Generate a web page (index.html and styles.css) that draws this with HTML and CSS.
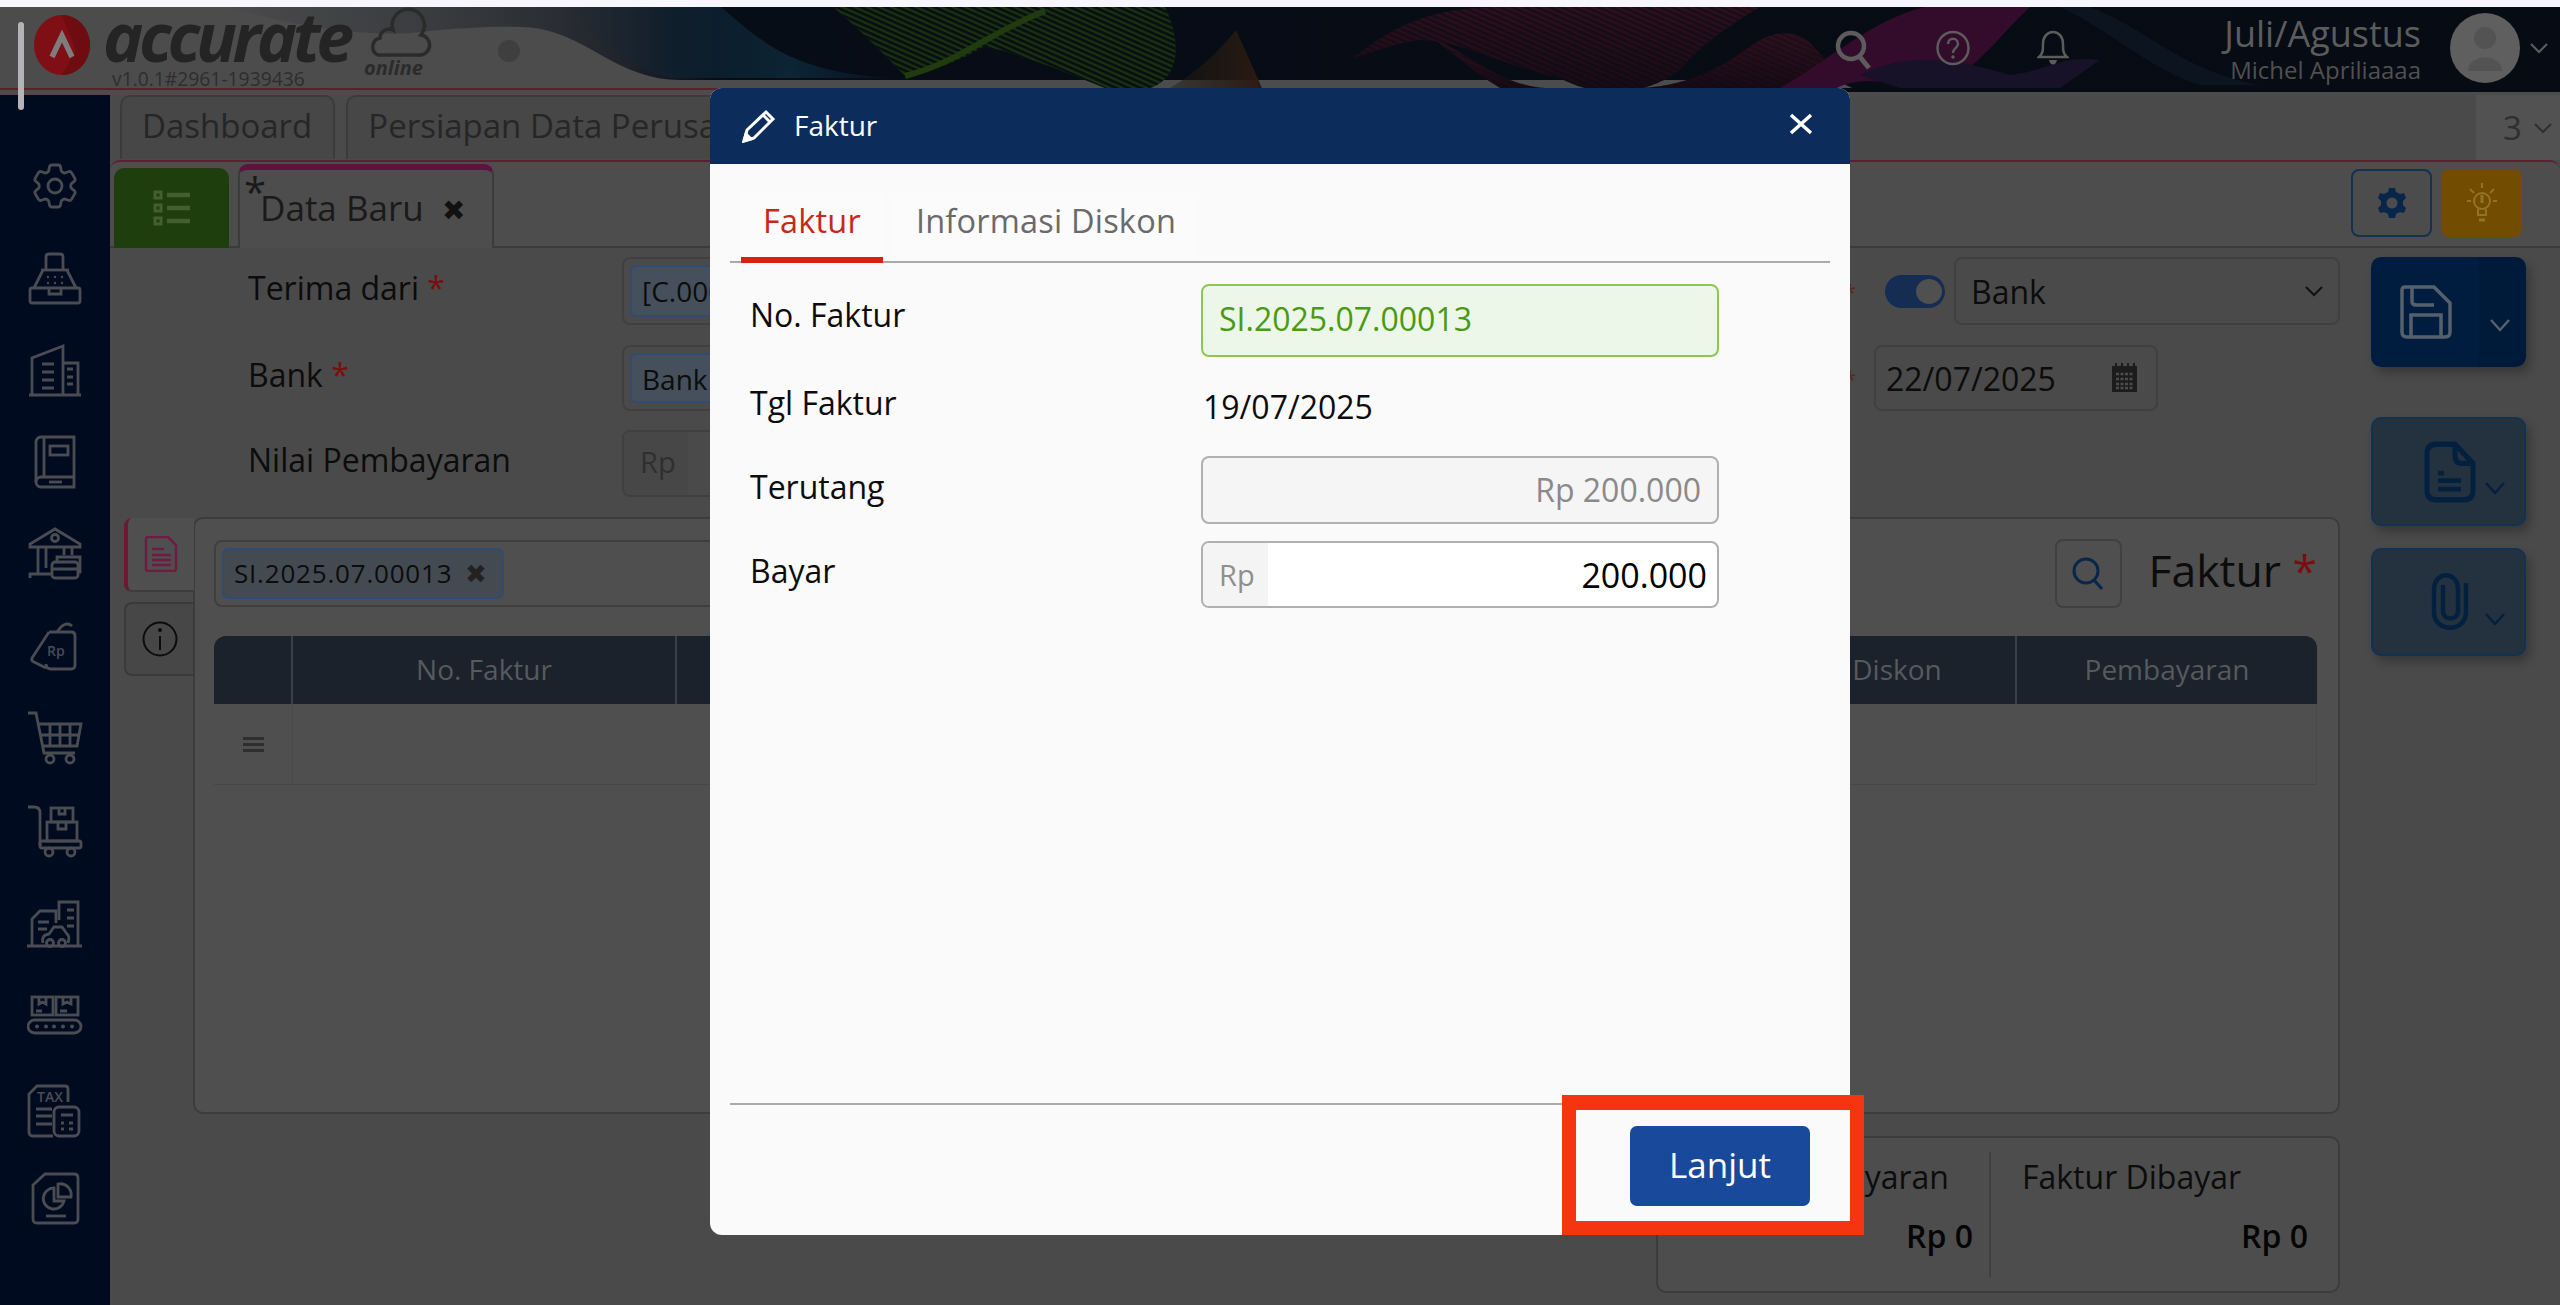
FILE: index.html
```html
<!DOCTYPE html>
<html lang="en">
<head>
  <meta charset="UTF-8">
  <title>Accurate Online - Penerimaan Penjualan</title>
  <link rel="stylesheet" href="styles.css">
</head>
<body>

  <div class="top-strip"></div>

  <header class="app-header">
    <svg class="header-art" viewBox="0 7 2560 88" width="2560" height="88" preserveAspectRatio="none">
      <defs>
        <linearGradient id="darkFade" x1="0" x2="1" y1="0" y2="0">
          <stop offset="0" stop-color="#4a4a4c"/>
          <stop offset="0.08" stop-color="#3c3d40"/>
          <stop offset="0.14" stop-color="#2a2d33"/>
          <stop offset="0.17" stop-color="#1f232b"/>
          <stop offset="0.21" stop-color="#070d16"/>
          <stop offset="1" stop-color="#060b14"/>
        </linearGradient>
        <linearGradient id="blueFade" x1="0" x2="1" y1="0" y2="0">
          <stop offset="0" stop-color="#10283a" stop-opacity="0"/>
          <stop offset="0.7" stop-color="#0c2434"/>
          <stop offset="1" stop-color="#0c2238" stop-opacity="0.3"/>
        </linearGradient>
        <linearGradient id="redFade" x1="0" x2="0" y1="0" y2="1">
          <stop offset="0" stop-color="#30101d"/>
          <stop offset="1" stop-color="#1a0a13"/>
        </linearGradient>
        <linearGradient id="brownFade" x1="0" x2="1" y1="0" y2="0">
          <stop offset="0" stop-color="#1d1a10" stop-opacity="0.4"/>
          <stop offset="1" stop-color="#2c1a12"/>
        </linearGradient>
        <pattern id="waveLines" width="5" height="5" patternUnits="userSpaceOnUse" patternTransform="rotate(24)">
          <rect width="5" height="2.800" fill="#060b14" fill-opacity="0.9"/>
        </pattern>
        <path id="g1" d="M833 7H1040C1010 25 980 62 905 76C880 50 860 30 833 7Z"/>
        <path id="g2" d="M1030 7H1165C1185 50 1175 80 1150 88H1105C1060 70 1010 50 985 47C1005 30 1020 15 1030 7Z"/>
        <path id="c1" d="M1353 58C1390 28 1430 7 1500 7H1760C1730 25 1700 45 1680 70C1640 100 1590 95 1560 78C1500 65 1460 40 1420 40C1400 42 1380 50 1353 58Z"/>
        <path id="c2" d="M1430 36C1470 55 1500 85 1545 88H1640C1700 85 1730 60 1760 40C1780 30 1800 30 1815 48C1830 65 1850 80 1790 88L1500 88C1470 70 1450 50 1430 36Z"/>
      </defs>
      <rect x="0" y="7" width="2560" height="88" fill="#4c4c4c"/>
      <path d="M230 7C290 26 370 38 420 32C470 27 520 25 540 29C590 38 620 80 680 80H1830C1845 80 1850 92 1870 92H2560V7Z" fill="url(#darkFade)"/>
      <path d="M560 7H721C760 40 790 72 890 78H670C630 70 600 30 560 7Z" fill="url(#blueFade)"/>
      <use href="#g1" fill="#1a320e"/>
      <use href="#g1" fill="url(#waveLines)"/>
      <use href="#g2" fill="#1a320e"/>
      <use href="#g2" fill="url(#waveLines)"/>
      <path d="M905 76C960 62 990 32 1045 11" fill="none" stroke="#213b0e" stroke-width="6"/>
      <path d="M1170 88C1200 70 1220 50 1236 30L1262 88Z" fill="url(#brownFade)"/>
      <use href="#c1" fill="url(#redFade)"/>
      <use href="#c1" fill="url(#waveLines)" fill-opacity="0.6"/>
      <use href="#c2" fill="url(#redFade)"/>
      <use href="#c2" fill="url(#waveLines)" fill-opacity="0.4"/>
      <path d="M1780 88C1830 60 1870 20 1925 7H2030C2000 35 1980 65 1950 80C1900 90 1860 70 1830 92Z" fill="#330b2b"/>
      <path d="M1860 75C1910 50 1960 60 2010 75C2050 70 2060 55 2100 60L2060 88H1900Z" fill="#171228"/>
      <path d="M2090 7C2150 30 2180 70 2260 85H2200C2150 70 2110 30 2060 7Z" fill="#0d1722" fill-opacity="0.8"/>
      <rect x="0" y="88" width="1840" height="2" fill="#5e2028"/>
      <rect x="1840" y="88" width="720" height="4" fill="#060b14"/>
      <rect x="1840" y="92" width="720" height="3" fill="#4c4c4c"/>
    </svg>

    <svg class="logo" width="540" height="88" viewBox="0 7 540 88">
      <ellipse cx="62" cy="45" rx="28" ry="30" fill="#7f0f15"/>
      <path d="M62 15A28 30 0 0 1 62 75L76 50Z" fill="#6d0c11"/>
      <path d="M52 57L62 36L72 57" fill="none" stroke="#7d7d7d" stroke-width="5.500"/>
      <text class="logo-word" x="103" y="62">accurate</text>
      <path d="M378 55H418A10 10 0 0 0 421 35A16 16 0 1 0 393 30A9 9 0 0 0 380 38A9 9 0 0 0 378 55Z" fill="none" stroke="#2b2b2b" stroke-width="3.500"/>
      <text class="logo-online" x="364" y="75">online</text>
      <text class="logo-version" x="112" y="86">v1.0.1#2961-1939436</text>
      <circle cx="509" cy="51" r="11" fill="#3f3f3f"/>
    </svg>

    <div class="header-tools">
      <svg class="tool-search" width="38" height="40" viewBox="0 0 38 40"><circle cx="16" cy="16" r="13" fill="none" stroke="#5c5c5c" stroke-width="4.500"/><path d="M25 27L34 38" stroke="#5c5c5c" stroke-width="5"/></svg>
      <svg class="tool-help" width="34" height="36" viewBox="0 0 34 36"><ellipse cx="17" cy="18" rx="15.500" ry="16" fill="none" stroke="#5c5c5c" stroke-width="2.500"/><path d="M12 14C12 7 22 7 22 14C22 18 17 18 17 23" fill="none" stroke="#5c5c5c" stroke-width="2.500"/><circle cx="17" cy="27" r="1.800" fill="#5c5c5c"/></svg>
      <svg class="tool-bell" width="32" height="36" viewBox="0 0 32 36"><path d="M2 27C6 24 6 20 6 14C6 7 10 2 16 2C22 2 26 7 26 14C26 20 26 24 30 27Z" fill="none" stroke="#5c5c5c" stroke-width="2.500"/><path d="M12 30C13 36 19 36 20 30" fill="#5c5c5c"/></svg>
      <div class="user-info">
        <div class="user-period">Juli/Agustus</div>
        <div class="user-name">Michel Apriliaaaa</div>
      </div>
      <svg class="avatar" width="70" height="70" viewBox="0 0 70 70"><circle cx="35" cy="35" r="35" fill="#5f5f5f"/><circle cx="35" cy="25" r="11" fill="#535353"/><path d="M18 58C18 40 52 40 52 58Z" fill="#535353"/></svg>
      <svg class="chev" width="18" height="12" viewBox="0 0 18 12"><path d="M1 2L9 10L17 2" fill="none" stroke="#5c5c5c" stroke-width="2"/></svg>
    </div>
  </header>

  <div class="app-body">
    <aside class="sidebar">
      <div class="side-item"><svg class="thin" width="56" height="56" viewBox="0 0 24 24"><path d="M9.594 3.94c.09-.542.56-.94 1.11-.94h2.593c.55 0 1.02.398 1.11.94l.213 1.281c.063.374.313.686.645.87.074.04.147.083.22.127.325.196.72.257 1.075.124l1.217-.456a1.125 1.125 0 0 1 1.37.49l1.296 2.247a1.125 1.125 0 0 1-.26 1.431l-1.003.827c-.293.241-.438.613-.43.992a7.723 7.723 0 0 1 0 .255c-.008.378.137.75.43.991l1.004.827c.424.35.534.955.26 1.43l-1.298 2.247a1.125 1.125 0 0 1-1.369.491l-1.217-.456c-.355-.133-.75-.072-1.076.124a6.47 6.47 0 0 1-.22.128c-.331.183-.581.495-.644.869l-.213 1.281c-.09.543-.56.94-1.11.94h-2.594c-.55 0-1.019-.398-1.11-.94l-.213-1.281c-.062-.374-.312-.686-.644-.87a6.52 6.52 0 0 1-.22-.127c-.325-.196-.72-.257-1.076-.124l-1.217.456a1.125 1.125 0 0 1-1.369-.49l-1.297-2.247a1.125 1.125 0 0 1 .26-1.431l1.004-.827c.292-.24.437-.613.43-.991a6.932 6.932 0 0 1 0-.255c.007-.38-.138-.751-.43-.992l-1.004-.827a1.125 1.125 0 0 1-.26-1.43l1.297-2.247a1.125 1.125 0 0 1 1.37-.491l1.216.456c.356.133.751.072 1.076-.124.072-.044.146-.086.22-.128.332-.183.582-.495.644-.869l.214-1.28Z"/><circle cx="12" cy="12" r="3"/></svg></div>
      <div class="side-item"><svg width="56" height="56" viewBox="0 0 56 56"><path d="M19 21V7Q19 4 22 4H33Q36 4 36 7V21"/><path d="M14 20H42"/><path d="M16 20L7 38M40 20L49 38"/><rect x="3" y="38" width="50" height="15" rx="2"/><path d="M22 38V44H34V38"/><g class="dots"><circle cx="21" cy="27" r="1.200"/><circle cx="28" cy="27" r="1.200"/><circle cx="35" cy="27" r="1.200"/><circle cx="21" cy="33" r="1.200"/><circle cx="28" cy="33" r="1.200"/><circle cx="35" cy="33" r="1.200"/></g></svg></div>
      <div class="side-item"><svg width="56" height="56" viewBox="0 0 56 56"><path d="M5 53V16L36 4V53"/><path d="M36 21H51V53"/><path d="M2 53H54"/><path d="M15 22H27M15 30H27M15 38H27M15 46H27M40 27H46M40 35H46M40 42H46"/></svg></div>
      <div class="side-item"><svg width="56" height="56" viewBox="0 0 56 56"><path d="M14 3H47V53H14A5 5 0 0 1 9 48V8A5 5 0 0 1 14 3Z"/><path d="M17 3V43M9 48A5 5 0 0 1 14 43H47"/><rect x="23" y="12" width="18" height="9"/><path d="M22 48H35"/></svg></div>
      <div class="side-item"><svg width="56" height="56" viewBox="0 0 56 56"><path d="M3 21V18L28 3L53 18V21Z"/><circle cx="28" cy="12" r="3.500"/><path d="M11 22V48M19 22V42M37 22V29M45 22V29"/><path d="M3 52V48H24"/><rect x="25" y="36" width="26" height="16" rx="3"/><path d="M25 43H51M30 36V31H53V46H51"/></svg></div>
      <div class="side-item"><svg width="56" height="56" viewBox="0 0 56 56"><path d="M22 14H44Q48 14 48 18V47Q48 51 44 51H24Q19 51 19 46"/><path d="M22 14L5 40Q4 43 7 44L19 50"/><path d="M30 14Q38 2 45 8"/><text class="side-text" x="20" y="38">Rp</text></svg></div>
      <div class="side-item"><svg width="56" height="56" viewBox="0 0 56 56"><path d="M1 3H9L17 43H48"/><path d="M12 14H54L50 36H15"/><path d="M23 14V36M33 14V36M43 14V36M13 25H52"/><circle cx="23" cy="49" r="4"/><circle cx="43" cy="49" r="4"/></svg></div>
      <div class="side-item"><svg width="56" height="56" viewBox="0 0 56 56"><path d="M1 5H7Q13 5 13 11V44"/><rect x="13" y="39" width="41" height="7" rx="2"/><circle cx="22" cy="50" r="4"/><circle cx="44" cy="50" r="4"/><rect x="20" y="20" width="30" height="19"/><rect x="24" y="6" width="22" height="14"/><path d="M31 20V27H39V20M32 6V12H38V6"/></svg></div>
      <div class="side-item nudge"><svg width="56" height="56" viewBox="0 0 56 56"><path d="M0 48H55"/><path d="M5 48V21L13 13H29V25"/><path d="M32 22V4H51V48"/><path d="M11 24H22M11 31H20M40 12H47M40 20H47M40 28H47"/><path d="M16 45Q14 37 22 36L27 29H35L40 36Q43 38 41 45"/><circle cx="23" cy="45" r="3.500"/><circle cx="35" cy="45" r="3.500"/></svg></div>
      <div class="side-item"><svg width="56" height="56" viewBox="0 0 56 56"><rect x="5" y="11" width="21" height="18"/><rect x="29" y="11" width="22" height="18"/><path d="M12 11V18L15.500 16L19 18V11M36 11V18L40 16L44 18V11M9 25H15M33 25H40"/><rect x="1" y="34" width="53" height="13" rx="6.500"/><g class="dots"><circle cx="10" cy="40.500" r="2"/><circle cx="19" cy="40.500" r="2"/><circle cx="27" cy="40.500" r="2"/><circle cx="36" cy="40.500" r="2"/><circle cx="45" cy="40.500" r="2"/></g></svg></div>
      <div class="side-item nudge"><svg width="56" height="56" viewBox="0 0 56 56"><path d="M41 20V7Q41 4 38 4H10L2 12V50Q2 54 6 54H26"/><text class="side-text" x="10" y="20">TAX</text><path d="M9 27H25M9 34H25M9 42H25"/><rect x="27" y="25" width="25" height="29" rx="5"/><path d="M34 33H46M34 41H37M42 41H46M34 47H37M42 47H46"/></svg></div>
      <div class="side-item"><svg width="56" height="56" viewBox="0 0 56 56"><path d="M6 15L18 4H47Q51 4 51 8V49Q51 53 47 53H10Q6 53 6 49Z"/><path d="M27 18A10.500 10.500 0 1 0 37 31H27Z"/><path d="M31 14A11 11 0 0 1 44 27H31Z"/><path d="M19 46H39"/></svg></div>
    </aside>

    <main class="main">
      <div class="module-tabs">
        <div class="module-tab">Dashboard</div>
        <div class="module-tab">Persiapan Data Perusahaan</div>
        <div class="tab-count">3 <svg width="18" height="12" viewBox="0 0 18 12"><path d="M1 2L9 10L17 2" fill="none" stroke="#2f2f2f" stroke-width="2"/></svg></div>
      </div>

      <div class="doc-head">
        <div class="list-tab">
          <svg width="38" height="36" viewBox="0 0 38 36" fill="none" stroke="#42602f" stroke-width="3"><rect x="2" y="2" width="6" height="6"/><rect x="2" y="15" width="6" height="6"/><rect x="2" y="28" width="6" height="6"/><path d="M14 5H37M14 18H37M14 31H37" stroke-width="4.500"/></svg>
        </div>
        <div class="data-tab">
          <span class="data-star">*</span>
          <span class="data-name">Data Baru</span>
          <span class="data-close">&#10006;</span>
        </div>
        <div class="doc-tools">
          <div class="tool-btn settings-btn">
            <svg width="28" height="30" viewBox="0 0 28 30"><path d="M11 0H17L18 4L22 6L26 5L28 10L25 13V17L28 20L26 25L22 24L18 26L17 30H11L10 26L6 24L2 25L0 20L3 17V13L0 10L2 5L6 6L10 4Z" fill="#08264a"/><circle cx="14" cy="15" r="5.500" fill="#4c4c4c"/></svg>
          </div>
          <div class="tool-btn bulb-btn">
            <svg width="32" height="46" viewBox="0 0 32 46" fill="none" stroke="#93722a" stroke-width="2"><circle cx="16" cy="21" r="8"/><path d="M12 29V35H20V29"/><path d="M13 40H19" stroke-width="3"/><path d="M16 3V8M4 9L8 13M28 9L24 13M1 21H5M27 21H31"/><path d="M16 15V23" stroke-width="3"/></svg>
          </div>
        </div>
      </div>

      <div class="doc-work">
        <div class="doc-left">
          <div class="form-row row-one">
            <div class="form-left">
              <label class="form-label">Terima dari <span class="req">*</span></label>
              <div class="lookup"><span class="lookup-chip">[C.00001] Pelanggan</span></div>
              <span class="side-req">*</span>
            </div>
            <div class="form-right">
              <span class="toggle"><span class="knob"></span></span>
              <div class="select-box">Bank
                <svg width="18" height="12" viewBox="0 0 18 12"><path d="M1 2L9 10L17 2" fill="none" stroke="#111" stroke-width="2"/></svg>
              </div>
            </div>
          </div>
          <div class="form-row row-two">
            <div class="form-left">
              <label class="form-label">Bank <span class="req">*</span></label>
              <div class="lookup"><span class="lookup-chip">Bank Mandiri</span></div>
              <span class="side-req">*</span>
            </div>
            <div class="form-right">
              <div class="date-box">22/07/2025
                <svg width="27" height="30" viewBox="0 0 27 30"><rect x="1" y="3" width="25" height="26" fill="#1c1c1c"/><path d="M5 0V6M11 0V6M17 0V6M23 0V6" stroke="#1c1c1c" stroke-width="2"/><path d="M5 11H22M5 16H22M5 21H22M5 25H22" stroke="#4c4c4c" stroke-width="2.500" stroke-dasharray="3 1.500"/></svg>
              </div>
            </div>
          </div>
          <div class="form-row row-three">
            <div class="form-left">
              <label class="form-label">Nilai Pembayaran</label>
              <div class="lookup amount"><span class="amount-rp">Rp</span></div>
            </div>
          </div>

          <div class="card-wrap">
            <div class="side-tabs">
              <div class="side-tab active">
                <svg width="34" height="36" viewBox="0 0 34 36" fill="none" stroke="#6f1c44" stroke-width="2.500"><path d="M2 3Q2 1 4 1H24L32 9V33Q32 35 30 35H4Q2 35 2 33Z"/><path d="M8 13H20M8 19H27M8 24H27M8 29H27"/></svg>
              </div>
              <div class="side-tab info">
                <svg width="36" height="36" viewBox="0 0 36 36" fill="none" stroke="#0c0c0c" stroke-width="2"><circle cx="18" cy="18" r="16.500"/><path d="M18 15V29"/><circle cx="18" cy="9" r="1" fill="#0c0c0c"/></svg>
              </div>
            </div>
            <section class="invoice-card">
              <div class="invoice-bar">
                <div class="chip-box">
                  <span class="chip">SI.2025.07.00013 <span class="chip-x">&#10006;</span></span>
                </div>
                <div class="search-btn">
                  <svg width="32" height="34" viewBox="0 0 32 34" fill="none" stroke="#08264a" stroke-width="3"><circle cx="14" cy="14" r="12"/><path d="M22 23L30 32"/></svg>
                </div>
                <div class="invoice-title">Faktur <span class="req">*</span></div>
              </div>
              <div class="grid-head">
                <div class="grid-col"></div>
                <div class="grid-col">No. Faktur</div>
                <div class="grid-col">Tgl Faktur</div>
                <div class="grid-col diskon-col">Diskon</div>
                <div class="grid-col">Pembayaran</div>
              </div>
              <div class="grid-row">
                <div class="grid-handle"><span class="burger"></span></div>
                <div class="grid-fill"></div>
              </div>
            </section>
          </div>

          <div class="summary">
            <div class="sum-cell">
              <div class="sum-label">Total Pembayaran</div>
              <div class="sum-value">Rp 0</div>
            </div>
            <div class="sum-cell">
              <div class="sum-label">Faktur Dibayar</div>
              <div class="sum-value">Rp 0</div>
            </div>
          </div>
        </div>

        <div class="actions">
          <div class="action-btn save-btn">
            <svg width="52" height="54" viewBox="0 0 52 54" fill="none" stroke="#55606c" stroke-width="3.500"><path d="M5 2H34L50 18V47Q50 52 45 52H7Q2 52 2 47V5Q2 2 5 2Z"/><path d="M12 2V16Q12 20 16 20H34"/><path d="M11 52V30H41V52"/></svg>
            <svg class="save-chev" width="20" height="14" viewBox="0 0 20 14"><path d="M1 2L10 12L19 2" fill="none" stroke="#55606c" stroke-width="2.500"/></svg>
          </div>
          <div class="action-btn light-btn doc-btn">
            <svg width="52" height="62" viewBox="0 0 52 58" preserveAspectRatio="none" fill="none" stroke="#04203f" stroke-width="5"><path d="M12 3H31L49 21V46Q49 55 40 55H12Q3 55 3 46V12Q3 3 12 3Z"/><path d="M31 3V14Q31 21 38 21H49"/><path d="M14 30H20M14 37H37M14 45H37" stroke-width="4.500"/></svg>
            <svg class="light-chev" width="20" height="14" viewBox="0 0 20 14"><path d="M1 2L10 12L19 2" fill="none" stroke="#04203f" stroke-width="2.500"/></svg>
          </div>
          <div class="action-btn light-btn clip-btn">
            <svg width="38" height="58" viewBox="0 0 38 58" fill="none" stroke="#04203f" stroke-width="4.500"><path d="M35 10V39C35 60 3 60 3 39V17C3 -3 27 -2 27 16V38C27 48 12 48 12 38V12"/></svg>
            <svg class="light-chev" width="20" height="14" viewBox="0 0 20 14"><path d="M1 2L10 12L19 2" fill="none" stroke="#04203f" stroke-width="2.500"/></svg>
          </div>
        </div>
      </div>
    </main>
  </div>

  <div class="scroll-thumb"></div>

  <div class="dialog">
    <div class="dialog-head">
      <svg width="34" height="34" viewBox="0 0 34 34" fill="none" stroke="#fff" stroke-width="3"><path d="M2 32L5 21L24 3L31 10L12 29Z"/><path d="M21 6L28 13"/><path d="M2 32L4 25L9 30Z" fill="#fff"/></svg>
      <span class="dialog-title">Faktur</span>
      <svg class="dialog-close" width="24" height="22" viewBox="0 0 24 22" fill="none" stroke="#fff" stroke-width="3.500"><path d="M2 2L22 20M22 2L2 20"/></svg>
    </div>
    <div class="dialog-tabs">
      <div class="dialog-tab active">Faktur</div>
      <div class="dialog-tab">Informasi Diskon</div>
    </div>
    <div class="dialog-body">
      <div class="dialog-form">
        <div class="dlg-label">No. Faktur</div>
        <div class="dlg-input ok-input">SI.2025.07.00013</div>
        <div class="dlg-label">Tgl Faktur</div>
        <div class="dlg-plain">19/07/2025</div>
        <div class="dlg-label">Terutang</div>
        <div class="dlg-input ro-input">Rp 200.000</div>
        <div class="dlg-label">Bayar</div>
        <div class="dlg-input pay-input"><span class="pay-rp">Rp</span><span class="pay-value">200.000</span></div>
      </div>
    </div>
    <div class="dialog-foot">
      <button class="next-btn">Lanjut</button>
    </div>
  </div>

  <div class="mark-box"></div>

</body>
</html>
```

FILE: styles.css
```css
* {
  margin: 0;
  padding: 0;
  box-sizing: border-box;
}

html, body {
  width: 2560px;
  height: 1305px;
  overflow: hidden;
}

body {
  background-color: #4a4a4a;
  font-family: "Open Sans", "Noto Sans", sans-serif;
  font-size: 32px;
  color: #0c0c0c;
  display: flex;
  flex-direction: column;
}

.top-strip {
  height: 7px;
  background-color: #f6f6fc;
}

/* header */
.app-header {
  position: relative;
  height: 88px;
  display: flex;
  align-items: flex-start;
  overflow: hidden;
}

.header-art {
  position: absolute;
  top: 0;
  left: 0;
}

.logo {
  position: relative;
  overflow: visible;
  flex-shrink: 0;
}

.logo-word {
  font-family: "Open Sans", sans-serif;
  font-weight: 700;
  font-style: italic;
  font-size: 68px;
  letter-spacing: -4.400px;
  fill: #242424;
}

.logo-online {
  font-family: "Open Sans", sans-serif;
  font-weight: 700;
  font-style: italic;
  font-size: 20px;
  fill: #2b2b2b;
}

.logo-version {
  font-family: "Open Sans", sans-serif;
  font-size: 19.300px;
  fill: #2e2e2e;
}

.header-tools {
  position: relative;
  margin-left: auto;
  display: flex;
  align-items: center;
  height: 82px;
  padding-right: 12px;
  color: #5c5c5c;
}

.tool-search {
  margin-top: 3px;
}

.tool-help {
  margin-left: 63px;
}

.tool-bell {
  margin-left: 67px;
}

.user-info {
  margin-left: 155px;
  text-align: right;
}

.user-period {
  font-size: 36px;
  line-height: 44px;
}

.user-name {
  font-size: 24px;
  line-height: 28px;
  color: #505050;
}

.avatar {
  margin-left: 29px;
}

.chev {
  margin-left: 10px;
}

/* sidebar */
.app-body {
  flex: 1;
  display: flex;
  min-height: 0;
}

.sidebar {
  width: 110px;
  background-color: #000b20;
  padding-top: 45px;
  display: flex;
  flex-direction: column;
  flex-shrink: 0;
}

.side-item {
  height: 92px;
  display: flex;
  align-items: center;
  justify-content: center;
}

.side-item.nudge {
  padding-top: 7px;
}

.side-item svg {
  fill: none;
  stroke: #4a4c52;
  stroke-width: 2.800;
}

.side-item svg.thin {
  stroke-width: 1.200;
}

.side-item .dots {
  fill: #4a4c52;
  stroke: none;
}

.side-text {
  font-family: "Open Sans", sans-serif;
  font-size: 14px;
  font-weight: 600;
  fill: #4a4c52;
  stroke: none;
}

/* main */
.main {
  flex: 1;
  min-width: 0;
  display: flex;
  flex-direction: column;
}

.module-tabs {
  height: 65px;
  display: flex;
  padding-left: 10px;
  gap: 11px;
}

.module-tab {
  height: 64px;
  padding: 0 21px 0 20px;
  line-height: 58px;
  font-size: 33px;
  color: #262626;
  background-color: #474747;
  border: 2px solid #3b3b3b;
  border-bottom: none;
  border-radius: 10px 10px 0 0;
  white-space: nowrap;
}

.tab-count {
  margin-left: auto;
  width: 84px;
  background-color: #525252;
  color: #2f2f2f;
  font-size: 33px;
  display: flex;
  align-items: center;
  gap: 12px;
  padding-left: 27px;
}

.doc-head {
  height: 88px;
  display: flex;
  align-items: flex-end;
  padding-left: 4px;
  padding-right: 5px;
  background-color: #4d4d4d;
  border-top: 2px solid #5e2030;
  border-bottom: 2px solid #3b3b3b;
  border-radius: 10px 10px 0 0;
}

.list-tab {
  width: 115px;
  height: 80px;
  margin-bottom: -2px;
  background-color: #1e3f0d;
  border-radius: 10px 10px 0 0;
  display: flex;
  align-items: center;
  justify-content: center;
}

.data-tab {
  width: 256px;
  height: 84px;
  margin-left: 9px;
  margin-bottom: -2px;
  background-color: #4d4d4d;
  border: 2px solid #3b3b3b;
  border-top: 6px solid #5c1340;
  border-bottom: none;
  border-radius: 10px 10px 0 0;
  padding-left: 4px;
  display: flex;
  align-items: center;
  font-size: 35px;
  color: #1a1a1a;
}

.data-star {
  align-self: flex-start;
  font-size: 40px;
  line-height: 40px;
  margin-top: 2px;
  margin-right: -6px;
}

.data-name {
  padding-bottom: 3px;
}

.data-close {
  margin-left: 18px;
  font-size: 28px;
  color: #111;
}

.doc-tools {
  margin-left: auto;
  margin-bottom: 9px;
  display: flex;
  gap: 9px;
  padding-right: 33px;
}

.tool-btn {
  width: 81px;
  height: 68px;
  border-radius: 8px;
  display: flex;
  align-items: center;
  justify-content: center;
}

.settings-btn {
  border: 2px solid #123252;
  background-color: #4c4c4c;
}

.bulb-btn {
  background-color: #724c00;
}

.doc-work {
  display: flex;
  padding-left: 14px;
  gap: 31px;
}

.doc-left {
  width: 2216px;
  padding-top: 9px;
  flex-shrink: 0;
}

.form-row {
  display: flex;
  margin-bottom: 20px;
}

.row-one {
  height: 68px;
}

.row-two {
  height: 66px;
  margin-bottom: 19px;
}

.row-three {
  height: 67px;
}

.form-left {
  flex: 1;
  display: flex;
  align-items: center;
  padding-left: 124px;
}

.form-label {
  width: 374px;
  flex-shrink: 0;
  padding-bottom: 8px;
}

.req {
  color: #7a0e0e;
}

.lookup {
  width: 1000px;
  height: 100%;
  border: 2px solid #404040;
  border-radius: 8px;
  padding: 6px;
  display: flex;
}

.lookup-chip {
  flex: 1;
  border: 2px solid #304c74;
  border-radius: 6px;
  background-color: #46505c;
  padding-left: 10px;
  font-size: 28px;
  line-height: 48px;
  white-space: nowrap;
}

.amount {
  padding: 0;
}

.amount-rp {
  width: 64px;
  background-color: #474747;
  color: #2f2f2f;
  font-size: 29px;
  line-height: 60px;
  padding-left: 16px;
  border-radius: 8px 0 0 8px;
}

.side-req {
  margin-left: auto;
  width: 30px;
  font-size: 22px;
  color: #5c2424;
}

.form-right {
  width: 466px;
  display: flex;
  align-items: center;
  flex-shrink: 0;
}

.toggle {
  width: 60px;
  height: 33px;
  margin-left: 11px;
  margin-right: 9px;
  border-radius: 17px;
  background-color: #152d52;
  position: relative;
  flex-shrink: 0;
}

.knob {
  position: absolute;
  top: 4px;
  right: 3px;
  width: 26px;
  height: 25px;
  border-radius: 50%;
  background-color: #505050;
}

.select-box {
  flex: 1;
  height: 68px;
  border: 2px solid #404040;
  border-radius: 8px;
  padding: 0 15px 0 15px;
  display: flex;
  align-items: center;
  justify-content: space-between;
}

.date-box {
  width: 284px;
  height: 66px;
  border: 2px solid #404040;
  border-radius: 8px;
  padding: 0 18px 0 10px;
  display: flex;
  align-items: center;
  justify-content: space-between;
}

/* invoice card */
.card-wrap {
  display: flex;
  height: 597px;
}

.side-tabs {
  width: 69px;
  padding-top: 1px;
  flex-shrink: 0;
}

.side-tab {
  height: 74px;
  margin-bottom: 10px;
  border-radius: 8px 0 0 8px;
  display: flex;
  align-items: center;
  justify-content: center;
}

.side-tab.active {
  border-left: 4px solid #701832;
  border-bottom: 2px solid #3c3c3c;
  background-color: #4f4f4f;
  position: relative;
  z-index: 1;
  margin-right: -1px;
}

.side-tab.info {
  background-color: #474747;
  border: 2px solid #3a3a3a;
  border-right: none;
}

.invoice-card {
  flex: 1;
  min-width: 0;
  background-color: #4f4f4f;
  border: 2px solid #3c3c3c;
  border-radius: 10px;
  padding: 20px 21px 0 19px;
}

.invoice-bar {
  display: flex;
  align-items: center;
  height: 69px;
}

.chip-box {
  width: 1400px;
  height: 67px;
  border: 2px solid #3f3f3f;
  border-radius: 8px;
  padding: 6px;
  display: flex;
  align-items: center;
  flex-shrink: 0;
}

.chip {
  width: 282px;
  height: 51px;
  border: 2px solid #304c74;
  border-radius: 6px;
  background-color: #444a52;
  padding-left: 10px;
  font-size: 26px;
  line-height: 47px;
  letter-spacing: 0.800px;
  white-space: nowrap;
}

.chip-x {
  margin-left: 5px;
  font-size: 26px;
  line-height: 26px;
  color: #222;
}

.search-btn {
  width: 67px;
  height: 69px;
  margin-left: auto;
  border: 2px solid #404040;
  border-radius: 8px;
  display: flex;
  align-items: center;
  justify-content: center;
  flex-shrink: 0;
}

.invoice-title {
  margin-left: 27px;
  padding-bottom: 8px;
  font-size: 44.500px;
  white-space: nowrap;
}

.grid-head {
  margin-top: 28px;
  height: 68px;
  background-color: #1b222b;
  border-radius: 12px 12px 0 0;
  display: grid;
  grid-template-columns: 79px 384px 1fr 244px 300px;
  color: #565a5e;
  font-size: 28px;
}

.grid-col {
  display: flex;
  align-items: center;
  justify-content: center;
  border-right: 2px solid #3a4048;
  padding-bottom: 3px;
}

.grid-col:last-child {
  border-right: none;
}

.diskon-col {
  padding-left: 6px;
}

.grid-row {
  height: 81px;
  display: flex;
  border-bottom: 1px solid #474747;
  border-right: 1px dotted #444;
}

.grid-handle {
  width: 79px;
  border-right: 1px dotted #444;
  display: flex;
  align-items: center;
  justify-content: center;
}

.burger {
  width: 21px;
  height: 15px;
  border-top: 3px solid #2e2e2e;
  border-bottom: 3px solid #2e2e2e;
  position: relative;
}

.burger::after {
  content: "";
  position: absolute;
  left: 0;
  right: 0;
  top: 3px;
  height: 3px;
  background-color: #2e2e2e;
}

.grid-fill {
  flex: 1;
}

.summary {
  width: 684px;
  height: 157px;
  margin-top: 22px;
  margin-left: auto;
  background-color: #4d4d4d;
  border: 2px solid #3c3c3c;
  border-radius: 10px;
  padding: 14px 0;
  display: flex;
}

.sum-cell {
  padding: 3px 30px 0 20px;
  flex: 1;
}

.sum-cell:first-child {
  flex: 0 0 333px;
  border-right: 2px solid #3f3f3f;
  padding-right: 16px;
}

.sum-cell:last-child {
  padding-left: 31px;
}

.sum-label {
  line-height: 44px;
  white-space: nowrap;
}

.sum-value {
  text-align: right;
  font-weight: 600;
  line-height: 44px;
  margin-top: 15px;
  color: #050505;
}

/* right buttons */
.actions {
  width: 155px;
  padding-top: 9px;
  display: flex;
  flex-direction: column;
  flex-shrink: 0;
}

.action-btn {
  position: relative;
  border-radius: 10px;
  box-shadow: 4px 6px 10px rgba(0, 0, 0, 0.25);
  display: flex;
  align-items: center;
}

.save-btn {
  height: 110px;
  padding-left: 29px;
  background: linear-gradient(to right, #001d40 0, #001d40 107px, #001a39 107px);
  margin-bottom: 50px;
}

.save-chev {
  position: absolute;
  left: 119px;
  top: 61px;
}

.light-btn {
  background-color: #243240;
  border: 2px solid #123252;
}

.doc-btn {
  height: 109px;
  margin-bottom: 22px;
  padding-left: 51px;
}

.clip-btn {
  height: 108px;
  padding-left: 58px;
}

.light-chev {
  position: absolute;
  left: 112px;
  top: 62px;
}

.scroll-thumb {
  position: absolute;
  left: 18px;
  top: 22px;
  width: 6px;
  height: 88px;
  border-radius: 3px;
  background-color: #b4b4b6;
}

/* dialog */
.dialog {
  position: absolute;
  left: 710px;
  top: 88px;
  width: 1140px;
  height: 1147px;
  background-color: #fafafa;
  border-radius: 12px 12px 0 12px;
  display: flex;
  flex-direction: column;
  overflow: hidden;
}

.dialog-head {
  height: 76px;
  background-color: #0c2d5c;
  color: #fff;
  display: flex;
  align-items: center;
  padding: 0 37px 0 32px;
  flex-shrink: 0;
}

.dialog-title {
  margin-left: 18px;
  padding-bottom: 2px;
  font-size: 28px;
}

.dialog-close {
  margin-left: auto;
  margin-bottom: 4px;
}

.dialog-tabs {
  margin: 29px 20px 0;
  height: 70px;
  display: flex;
  gap: 11px;
  padding-left: 11px;
  border-bottom: 2px solid #aaaaaa;
  flex-shrink: 0;
}

.dialog-tab {
  padding: 0 22px;
  font-size: 32.500px;
  line-height: 55px;
  letter-spacing: 0.200px;
  color: #6a6a6a;
  background-color: #fbfbfb;
  height: 68px;
}

.dialog-tab.active {
  height: 70px;
  color: #c8281a;
  border-bottom: 6px solid #d6220f;
}

.dialog-body {
  flex: 1;
  padding: 21px 40px 0;
}

.dialog-form {
  display: grid;
  grid-template-columns: 451px 518px;
  grid-template-rows: 73px 65px 68px 67px;
  row-gap: 17px;
  align-items: center;
}

.dlg-label {
  padding-bottom: 8px;
}

.dlg-label:first-child {
  padding-bottom: 12px;
}

.dlg-plain {
  padding-left: 2px;
}

.dlg-input {
  height: 100%;
  border: 2px solid #b0b0b0;
  border-radius: 8px;
  display: flex;
  align-items: center;
}

.ok-input {
  background-color: #ecf7e9;
  border-color: #8cc84b;
  color: #4a9a12;
  padding: 0 0 4px 16px;
}

.ro-input {
  background-color: #f5f5f5;
  color: #8a8a8a;
  justify-content: flex-end;
  padding: 0 16px 2px 0;
}

.pay-input {
  background-color: #fff;
  overflow: hidden;
}

.pay-rp {
  width: 65px;
  height: 100%;
  background-color: #f4f4f4;
  color: #8f8f8f;
  padding-left: 16px;
  font-size: 29px;
  display: flex;
  align-items: center;
}

.pay-value {
  margin-left: auto;
  padding-right: 10px;
  font-size: 34px;
  color: #000;
}

.dialog-foot {
  height: 132px;
  margin: 0 30px 0 20px;
  border-top: 2px solid #aaaaaa;
  padding-top: 21px;
  display: flex;
  justify-content: flex-end;
  padding-right: 10px;
  flex-shrink: 0;
}

.next-btn {
  width: 180px;
  height: 80px;
  border: none;
  border-radius: 7px;
  background-color: #18499a;
  color: #fff;
  font-family: "Open Sans", sans-serif;
  font-size: 35px;
  padding-bottom: 4px;
}

/* red annotation over the button */
.mark-box {
  position: absolute;
  left: 1562px;
  top: 1095px;
  width: 302px;
  height: 140px;
  border: 14px solid #f5350f;
  border-top-width: 15px;
}
```
